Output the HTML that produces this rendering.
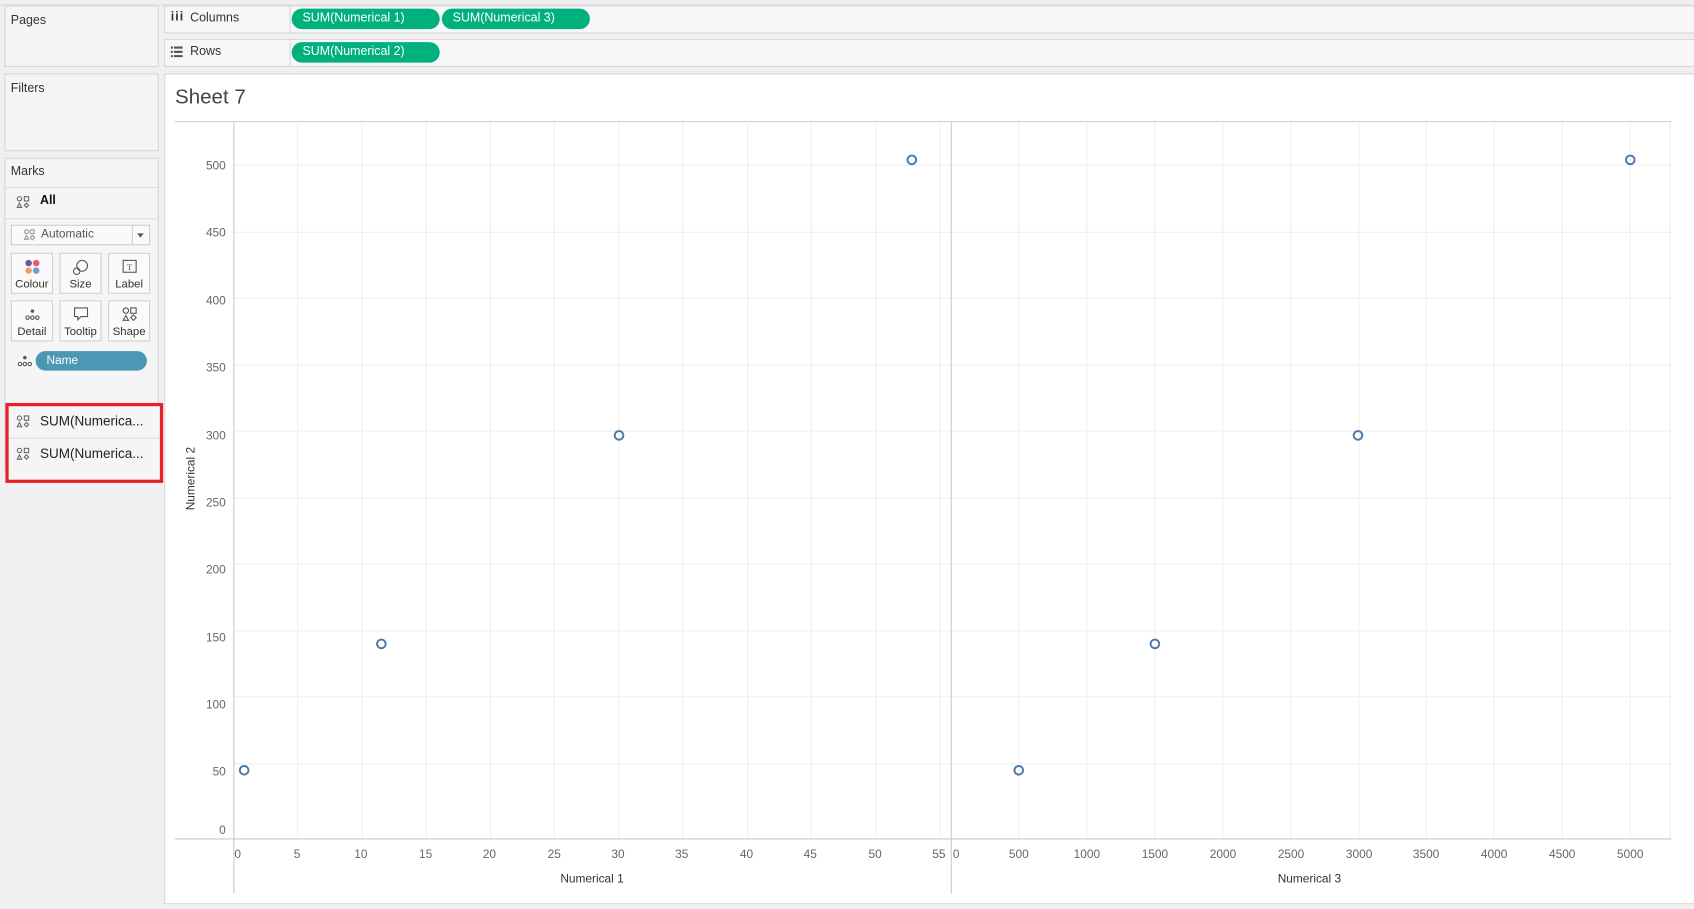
<!DOCTYPE html>
<html><head><meta charset="utf-8"><style>
html,body{margin:0;padding:0;width:1694px;height:909px;overflow:hidden;background:#f0f0f0;font-family:"Liberation Sans",sans-serif;}
#w{position:absolute;left:0;top:0;width:1568px;height:841px;transform:scale(1.08036);transform-origin:0 0;}
.p{position:absolute;background:#f5f5f5;border:1px solid #d6d6d6;box-sizing:border-box;}
.t{position:absolute;font-size:11.5px;color:#333;}
.pill{position:absolute;height:19px;border-radius:10px;background:#00b17d;color:#fff;font-size:11.5px;line-height:19px;padding-left:10px;box-sizing:border-box;}
.btn{position:absolute;width:39px;height:38px;border:1px solid #d0d0d0;background:#fafafa;box-sizing:border-box;font-size:10.5px;color:#333;text-align:center;}
.btn span{position:absolute;left:0;right:0;bottom:2px;}
.ic{position:absolute;left:0;right:0;top:4px;text-align:center;}
</style></head><body><div id="w">
<div style="position:absolute;left:0;top:0;width:1568px;height:4px;background:#f0f0f0;border-bottom:1px solid #ddd"></div>
<div class="p" style="left:4px;top:5px;width:143px;height:57px"></div>
<div class="t" style="left:10px;top:13px">Pages</div>
<div class="p" style="left:152px;top:5px;width:1420px;height:26px;background:#f7f7f7"></div>
<div style="position:absolute;left:268px;top:5px;width:1px;height:26px;background:#d6d6d6"></div>
<div class="t" style="left:158px;top:10px;font-weight:bold;letter-spacing:1px">iii</div>
<div class="t" style="left:176px;top:11px">Columns</div>
<div class="pill" style="left:270px;top:8px;width:137px">SUM(Numerical 1)</div>
<div class="pill" style="left:409px;top:8px;width:137px">SUM(Numerical 3)</div>
<div class="p" style="left:152px;top:36px;width:1420px;height:26px;background:#f7f7f7"></div>
<div style="position:absolute;left:268px;top:36px;width:1px;height:26px;background:#d6d6d6"></div>
<svg style="position:absolute;left:158px;top:43px" width="12" height="10"><g fill="#555"><rect x="0" y="0" width="2" height="2"/><rect x="3" y="0" width="8" height="2"/><rect x="0" y="4" width="2" height="2"/><rect x="3" y="4" width="8" height="2"/><rect x="0" y="8" width="2" height="2"/><rect x="3" y="8" width="8" height="2"/></g></svg>
<div class="t" style="left:176px;top:42px">Rows</div>
<div class="pill" style="left:270px;top:39px;width:137px">SUM(Numerical 2)</div>
<div class="p" style="left:4px;top:68px;width:143px;height:72px"></div>
<div class="t" style="left:10px;top:76px">Filters</div>
<div class="p" style="left:4px;top:146px;width:143px;height:290px"></div>
<div class="t" style="left:10px;top:153px">Marks</div>
<div style="position:absolute;left:5px;top:173px;width:141px;height:1px;background:#ddd"></div>
<div style="position:absolute;left:5px;top:202px;width:141px;height:1px;background:#ddd"></div>
<svg style="position:absolute;left:15px;top:181px" width="13" height="12"><g fill="none" stroke="#666"><circle cx="3" cy="3" r="2"/><rect x="7.5" y="1" width="4" height="4"/><path d="M3 7L5 11H1Z"/><path d="M9.5 7L11.5 9L9.5 11L7.5 9Z"/></g></svg>
<div class="t" style="left:37px;top:180px;font-weight:bold;color:#111">All</div>
<div style="position:absolute;left:10px;top:208px;width:129px;height:19px;border:1px solid #ccc;background:#fafafa;box-sizing:border-box"></div>
<div style="position:absolute;left:122px;top:209px;width:1px;height:17px;background:#ccc"></div>
<div style="position:absolute;left:127px;top:216px;border:3.5px solid transparent;border-top:4px solid #555"></div>
<svg style="position:absolute;left:22px;top:212px" width="11" height="11"><g fill="none" stroke="#999"><circle cx="2.5" cy="2.5" r="1.8"/><rect x="6" y="0.8" width="3.5" height="3.5"/><path d="M2.5 6L4.5 9.5H0.5Z"/><path d="M8 6L10 8L8 10L6 8Z"/></g></svg>
<div class="t" style="left:38px;top:211px;font-size:11px;color:#555">Automatic</div>
<div class="btn" style="left:10px;top:234px"><svg class="ic" style="left:12px;top:5px" width="14" height="14"><circle cx="3.5" cy="3.5" r="3" fill="#6b5a9b"/><circle cx="10.5" cy="3.5" r="3" fill="#e8596a"/><circle cx="3.5" cy="10.5" r="3" fill="#f0a062"/><circle cx="10.5" cy="10.5" r="3" fill="#6f9cd0"/></svg><span>Colour</span></div>
<div class="btn" style="left:55px;top:234px"><svg class="ic" style="left:11px;top:5px" width="16" height="15"><g fill="none" stroke="#555"><circle cx="9" cy="6" r="5"/><circle cx="4" cy="11" r="3"/></g></svg><span>Size</span></div>
<div class="btn" style="left:100px;top:234px"><svg class="ic" style="left:12px;top:5px" width="14" height="14"><rect x="1" y="1" width="12" height="11" fill="none" stroke="#555"/><text x="7" y="10" font-size="8" text-anchor="middle" fill="#555" font-family="Liberation Serif">T</text></svg><span>Label</span></div>
<div class="btn" style="left:10px;top:278px"><svg class="ic" style="left:12px;top:6px" width="14" height="12"><circle cx="7" cy="3" r="1.6" fill="#555"/><g fill="none" stroke="#555"><circle cx="2.5" cy="9" r="1.6"/><circle cx="7" cy="9" r="1.6"/><circle cx="11.5" cy="9" r="1.6"/></g></svg><span>Detail</span></div>
<div class="btn" style="left:55px;top:278px"><svg class="ic" style="left:12px;top:5px" width="15" height="14"><path d="M1 1H13V9H7L4 12V9H1Z" fill="none" stroke="#555"/></svg><span>Tooltip</span></div>
<div class="btn" style="left:100px;top:278px"><svg class="ic" style="left:12px;top:5px" width="15" height="14"><g fill="none" stroke="#555"><circle cx="3.5" cy="3.5" r="2.5"/><rect x="8" y="1" width="5" height="5"/><path d="M3.5 8L6 12.5H1Z"/><path d="M10.5 7.5L13 10L10.5 12.5L8 10Z"/></g></svg><span>Shape</span></div>
<svg style="position:absolute;left:16px;top:328px" width="14" height="12"><circle cx="7" cy="3" r="1.6" fill="#555"/><g fill="none" stroke="#555"><circle cx="2.5" cy="9" r="1.6"/><circle cx="7" cy="9" r="1.6"/><circle cx="11.5" cy="9" r="1.6"/></g></svg>
<div class="pill" style="left:33px;top:325px;width:103px;height:18px;line-height:18px;background:#4a98b3;font-size:11px">Name</div>
<div style="position:absolute;left:5px;top:373px;width:146px;height:74px;border:3px solid #e8202a;box-sizing:border-box;background:#f5f5f5"></div>
<div style="position:absolute;left:8px;top:405px;width:140px;height:1px;background:#ddd"></div>
<svg style="position:absolute;left:15px;top:384px" width="13" height="12"><g fill="none" stroke="#666"><circle cx="3" cy="3" r="2"/><rect x="7.5" y="1" width="4" height="4"/><path d="M3 7L5 11H1Z"/><path d="M9.5 7L11.5 9L9.5 11L7.5 9Z"/></g></svg>
<div class="t" style="left:37px;top:383px;font-size:12.5px;color:#222">SUM(Numerica...</div>
<svg style="position:absolute;left:15px;top:414px" width="13" height="12"><g fill="none" stroke="#666"><circle cx="3" cy="3" r="2"/><rect x="7.5" y="1" width="4" height="4"/><path d="M3 7L5 11H1Z"/><path d="M9.5 7L11.5 9L9.5 11L7.5 9Z"/></g></svg>
<div class="t" style="left:37px;top:413px;font-size:12.5px;color:#222">SUM(Numerica...</div>
<div style="position:absolute;left:152px;top:68px;width:1420px;height:769px;background:#fff;border:1px solid #d6d6d6;box-sizing:border-box"></div>
<div style="position:absolute;left:162px;top:80px;font-size:19px;color:#444">Sheet 7</div>
<svg style="position:absolute;left:0;top:0" width="1568" height="841" font-family="Liberation Sans" font-size="11" fill="#666">
<line x1="162" y1="112.5" x2="1547" y2="112.5" stroke="#d0d0d0"/>
<g stroke="#efefef">
<line x1="216" y1="153" x2="1547" y2="153"/><line x1="216" y1="215" x2="1547" y2="215"/><line x1="216" y1="276" x2="1547" y2="276"/><line x1="216" y1="338" x2="1547" y2="338"/><line x1="216" y1="399" x2="1547" y2="399"/><line x1="216" y1="461" x2="1547" y2="461"/><line x1="216" y1="522" x2="1547" y2="522"/><line x1="216" y1="584" x2="1547" y2="584"/><line x1="216" y1="645" x2="1547" y2="645"/><line x1="216" y1="707" x2="1547" y2="707"/>
<line x1="275.5" y1="113" x2="275.5" y2="776"/><line x1="335" y1="113" x2="335" y2="776"/><line x1="394.5" y1="113" x2="394.5" y2="776"/><line x1="454" y1="113" x2="454" y2="776"/><line x1="513" y1="113" x2="513" y2="776"/><line x1="573" y1="113" x2="573" y2="776"/><line x1="632" y1="113" x2="632" y2="776"/><line x1="692" y1="113" x2="692" y2="776"/><line x1="751" y1="113" x2="751" y2="776"/><line x1="811" y1="113" x2="811" y2="776"/><line x1="870" y1="113" x2="870" y2="776"/>
<line x1="943" y1="113" x2="943" y2="776"/><line x1="1006" y1="113" x2="1006" y2="776"/><line x1="1069" y1="113" x2="1069" y2="776"/><line x1="1132" y1="113" x2="1132" y2="776"/><line x1="1195" y1="113" x2="1195" y2="776"/><line x1="1258" y1="113" x2="1258" y2="776"/><line x1="1320" y1="113" x2="1320" y2="776"/><line x1="1383" y1="113" x2="1383" y2="776"/><line x1="1446" y1="113" x2="1446" y2="776"/><line x1="1509" y1="113" x2="1509" y2="776"/><line x1="1546" y1="113" x2="1546" y2="776"/>
</g>
<g stroke="#c8c8c8"><line x1="216.5" y1="113" x2="216.5" y2="827"/><line x1="880.5" y1="113" x2="880.5" y2="827"/><line x1="162" y1="776.5" x2="1547" y2="776.5"/></g>
<g text-anchor="end"><text x="209" y="157">500</text><text x="209" y="219">450</text><text x="209" y="282">400</text><text x="209" y="344">350</text><text x="209" y="407">300</text><text x="209" y="469">250</text><text x="209" y="531">200</text><text x="209" y="594">150</text><text x="209" y="656">100</text><text x="209" y="718">50</text><text x="209" y="772">0</text></g>
<g text-anchor="middle"><text x="220" y="794">0</text><text x="275" y="794">5</text><text x="334" y="794">10</text><text x="394" y="794">15</text><text x="453" y="794">20</text><text x="513" y="794">25</text><text x="572" y="794">30</text><text x="631" y="794">35</text><text x="691" y="794">40</text><text x="750" y="794">45</text><text x="810" y="794">50</text><text x="869" y="794">55</text>
<text x="885" y="794">0</text><text x="943" y="794">500</text><text x="1006" y="794">1000</text><text x="1069" y="794">1500</text><text x="1132" y="794">2000</text><text x="1195" y="794">2500</text><text x="1258" y="794">3000</text><text x="1320" y="794">3500</text><text x="1383" y="794">4000</text><text x="1446" y="794">4500</text><text x="1509" y="794">5000</text>
<text x="548" y="817" fill="#333">Numerical 1</text><text x="1212" y="817" fill="#333">Numerical 3</text>
<text transform="translate(180,443) rotate(-90)" fill="#333">Numerical 2</text></g>
<g fill="none" stroke="#4e79a7" stroke-width="1.8"><circle cx="226" cy="713" r="4"/><circle cx="353" cy="596" r="4"/><circle cx="573" cy="403" r="4"/><circle cx="844" cy="148" r="4"/><circle cx="943" cy="713" r="4"/><circle cx="1069" cy="596" r="4"/><circle cx="1257" cy="403" r="4"/><circle cx="1509" cy="148" r="4"/></g>
</svg>
</div></body></html>
